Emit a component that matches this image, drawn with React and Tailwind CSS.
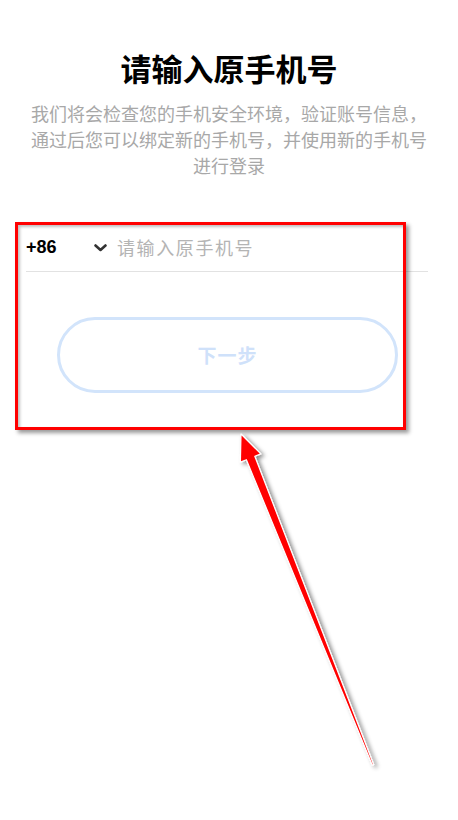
import React from "react";

const cjk = { fontFamily: '"Noto Sans CJK SC", "Noto Sans", sans-serif' };

function Chevron() {
  return (
    <svg width="13" height="8" viewBox="0 0 13 8" className="shrink-0">
      <path d="M1.5 1.5 L6.5 6 L11.5 1.5" fill="none" stroke="#333" strokeWidth="2.6" strokeLinecap="round" strokeLinejoin="round" />
    </svg>
  );
}

function PointerArrow() {
  // red callout arrow pointing up at the highlighted form
  const pts = "241,434 260.8,453.9 254.8,456.3 373.7,764.7 372.3,765.3 246.4,459.7 240.4,462.1";
  return (
    <svg className="absolute left-0 top-0 pointer-events-none" width="458" height="820" viewBox="0 0 458 820">
      <defs>
        <filter id="arrowShadow" x="-20%" y="-20%" width="140%" height="140%">
          <feDropShadow dx="3" dy="2" stdDeviation="2" floodColor="#000" floodOpacity="0.45" />
        </filter>
      </defs>
      <polygon points={pts} fill="#ff0000" stroke="#ffffff" strokeWidth="1.2" strokeLinejoin="round" filter="url(#arrowShadow)" />
    </svg>
  );
}

export default function App() {
  return (
    <div className="relative w-[458px] h-[820px] bg-white overflow-hidden" style={cjk}>
      <div className="flex flex-col items-center pt-[52px]">
        <h1 className="text-[31px] leading-[32px] font-bold text-black">请输入原手机号</h1>
        <p className="mt-[16px] text-[18px] leading-[26px] text-[#a8a8a8] text-center px-[28px]">
          我们将会检查您的手机安全环境，验证账号信息，
          <br />
          通过后您可以绑定新的手机号，并使用新的手机号
          <br />
          进行登录
        </p>
      </div>

      <div className="mt-[46px] pl-[26px] pr-[30px]">
        <div className="flex items-center h-[48px] border-b border-[#e2e2e2]">
          <span className="text-[18px] font-bold text-black w-[68px]" style={{ fontFamily: '"Liberation Sans", sans-serif' }}>+86</span>
          <Chevron />
          <span className="ml-[10px] text-[18px] tracking-[1.6px] text-[#b4b4b4]">请输入原手机号</span>
        </div>
        <button className="mt-[45px] ml-[31px] w-[341px] h-[76px] rounded-full border-[3px] border-[#d2e4fb] bg-white flex items-center justify-center">
          <span className="text-[19px] font-bold text-[#cfe1fa] tracking-[1px]">下一步</span>
        </button>
      </div>

      <div className="absolute left-[15px] top-[222px] w-[391px] h-[208px] border-[3px] border-[#ff0000] shadow-[3px_3px_4px_rgba(0,0,0,0.4),inset_2px_2px_3px_rgba(0,0,0,0.25)] pointer-events-none" />

      <PointerArrow />
    </div>
  );
}
